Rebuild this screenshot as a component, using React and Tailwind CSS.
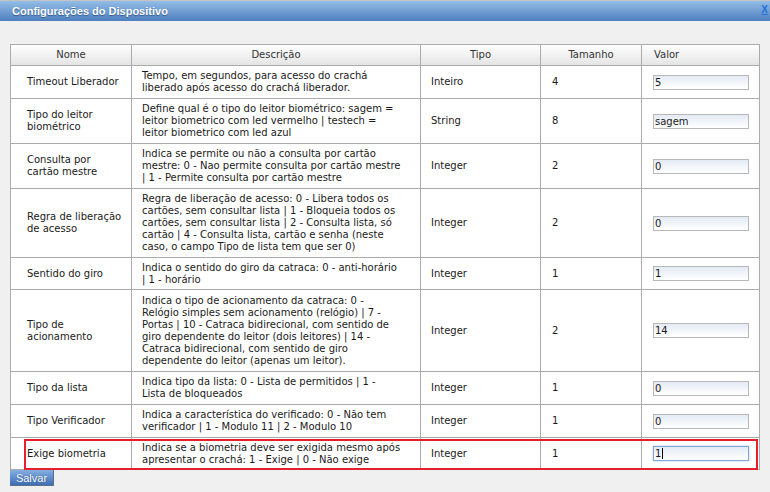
import React from "react";

const rows = [
  { name: ["Timeout Liberador"], desc: ["Tempo, em segundos, para acesso do crachá", "liberado após acesso do crachá liberador."], tipo: "Inteiro", tam: "4", val: "5", h: "h-[33px]" },
  { name: ["Tipo do leitor", "biométrico"], desc: ["Define qual é o tipo do leitor biométrico: sagem =", "leitor biometrico com led vermelho | testech =", "leitor biometrico com led azul"], tipo: "String", tam: "8", val: "sagem", h: "h-[45px]" },
  { name: ["Consulta por", "cartão mestre"], desc: ["Indica se permite ou não a consulta por cartão", "mestre: 0 - Nao permite consulta por cartão mestre", "| 1 - Permite consulta por cartão mestre"], tipo: "Integer", tam: "2", val: "0", h: "h-[45px]" },
  { name: ["Regra de liberação", "de acesso"], desc: ["Regra de liberação de acesso: 0 - Libera todos os", "cartões, sem consultar lista | 1 - Bloqueia todos os", "cartões, sem consultar lista | 2 - Consulta lista, só", "cartão | 4 - Consulta lista, cartão e senha (neste", "caso, o campo Tipo de lista tem que ser 0)"], tipo: "Integer", tam: "2", val: "0", h: "h-[69px]" },
  { name: ["Sentido do giro"], desc: ["Indica o sentido do giro da catraca: 0 - anti-horário", "| 1 - horário"], tipo: "Integer", tam: "1", val: "1", h: "h-[32px]" },
  { name: ["Tipo de", "acionamento"], desc: ["Indica o tipo de acionamento da catraca: 0 -", "Relógio simples sem acionamento (relógio) | 7 -", "Portas | 10 - Catraca bidirecional, com sentido de", "giro dependente do leitor (dois leitores) | 14 -", "Catraca bidirecional, com sentido de giro", "dependente do leitor (apenas um leitor)."], tipo: "Integer", tam: "2", val: "14", h: "h-[82px]" },
  { name: ["Tipo da lista"], desc: ["Indica tipo da lista: 0 - Lista de permitidos | 1 -", "Lista de bloqueados"], tipo: "Integer", tam: "1", val: "0", h: "h-[33px]" },
  { name: ["Tipo Verificador"], desc: ["Indica a característica do verificado: 0 - Não tem", "verificador | 1 - Modulo 11 | 2 - Modulo 10"], tipo: "Integer", tam: "1", val: "0", h: "h-[33px]" },
  { name: ["Exige biometria"], desc: ["Indica se a biometria deve ser exigida mesmo após", "apresentar o crachá: 1 - Exige | 0 - Não exige"], tipo: "Integer", tam: "1", val: "1", h: "h-[32px]", focus: true },
];

function Field({ value, focus }) {
  return (
    <div
      className={
        "w-[96px] h-[15px] border bg-gradient-to-b from-[#e4ebf5] to-white flex items-center pl-[1px] text-[10px] leading-[13px] text-[#1a1a1a] " +
        (focus ? "border-[#7ea6dc] shadow-[0_0_2px_#a9c4ea]" : "border-[#b8b8b8]")
      }
    >
      <span>{value}</span>
      {focus && <span className="w-px h-[11px] bg-black ml-px" />}
    </div>
  );
}

export default function App() {
  return (
    <div className="w-[770px] h-[492px] bg-[#f0f0f0] overflow-hidden text-[#1a1a1a] font-['DejaVu_Sans',Verdana,sans-serif]">
      <div className="h-[21px] border-t border-[#c4c4c4] bg-gradient-to-b from-[#93bde6] to-[#4f7fbf] flex items-center justify-between pl-[12px] pr-[2px]">
        <span className="text-white font-bold text-[11px] [text-shadow:0_1px_1px_#34568a] font-['Liberation_Sans',Arial,sans-serif]">
          Configurações do Dispositivo
        </span>
        <span className="text-[#1f6fe0] font-bold underline text-[10px] -mt-[4px] font-['Liberation_Sans',Arial,sans-serif]">X</span>
      </div>

      <div className="pl-[10px] pt-[23px] flex flex-col items-start">
        <div className="relative w-[749px]">
          <table className="w-[749px] table-fixed border-collapse text-[10px] leading-[12px] bg-white">
            <colgroup>
              <col className="w-[121px]" />
              <col className="w-[289px]" />
              <col className="w-[120px]" />
              <col className="w-[101px]" />
              <col className="w-[118px]" />
            </colgroup>
            <thead>
              <tr className="h-[21px] bg-gradient-to-b from-white to-[#e3e3e3]">
                <th className="border border-[#ababab] font-normal text-center text-[#333]">Nome</th>
                <th className="border border-[#ababab] font-normal text-center text-[#333]">Descrição</th>
                <th className="border border-[#ababab] font-normal text-center text-[#333]">Tipo</th>
                <th className="border border-[#ababab] font-normal text-center text-[#333]">Tamanho</th>
                <th className="border border-[#ababab] font-normal text-left pl-[12px] text-[#333]">Valor</th>
              </tr>
            </thead>
            <tbody>
              {rows.map((r, i) => (
                <tr key={i} className={r.h}>
                  <td className="border border-[#ababab] pl-[16px] align-middle whitespace-nowrap">
                    {r.name.map((l, j) => (
                      <div key={j}>{l}</div>
                    ))}
                  </td>
                  <td className="border border-[#ababab] pl-[10px] align-middle whitespace-nowrap">
                    {r.desc.map((l, j) => (
                      <div key={j}>{l}</div>
                    ))}
                  </td>
                  <td className="border border-[#ababab] pl-[10px] align-middle">{r.tipo}</td>
                  <td className="border border-[#ababab] pl-[11px] align-middle">{r.tam}</td>
                  <td className="border border-[#ababab] pl-[11px] align-middle">
                    <Field value={r.val} focus={r.focus} />
                  </td>
                </tr>
              ))}
            </tbody>
          </table>
          <div className="absolute left-[14px] bottom-0 w-[734px] h-[31px] border-2 border-[#e5202c] pointer-events-none" />
        </div>
        <button className="block w-[44px] h-[16px] bg-gradient-to-b from-[#86b0e2] to-[#3e6db3] border-b border-r border-[#5a6f8c] text-white text-[11px] leading-[14px] text-center [text-shadow:0_0_1px_#2a4a80] font-['Liberation_Sans',Arial,sans-serif]">
          Salvar
        </button>
      </div>
    </div>
  );
}
